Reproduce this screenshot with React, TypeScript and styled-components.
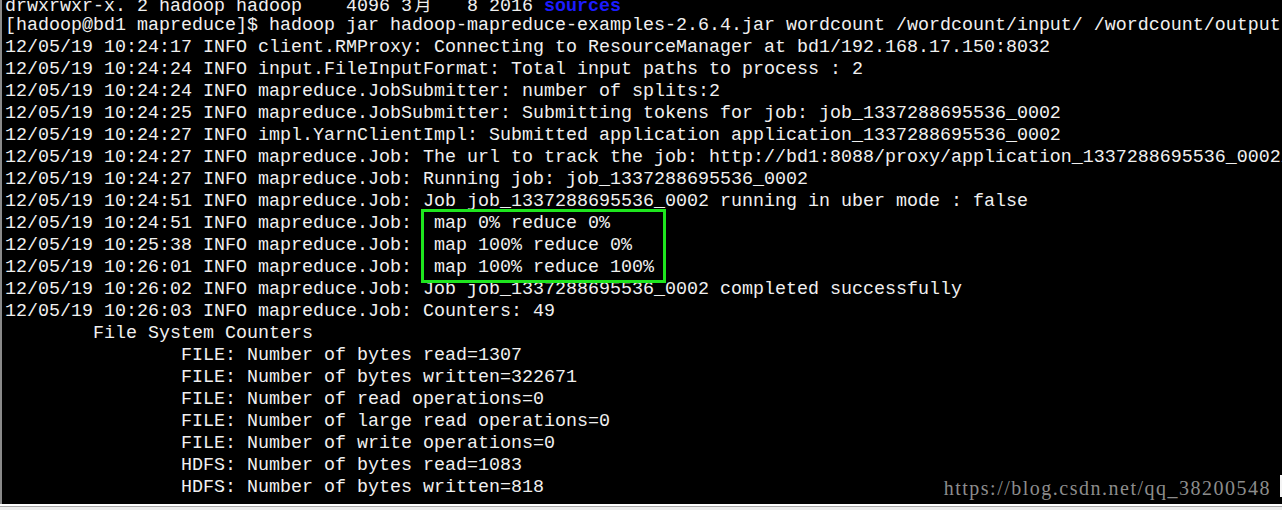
import styled, { createGlobalStyle } from 'styled-components'

const GlobalStyle = createGlobalStyle`
  html, body {
    margin: 0;
    padding: 0;
    background: #f0f0f0;
  }
  #root {
    width: 1282px;
    height: 510px;
    overflow: hidden;
  }
`

const JOB = '1337288695536_0002'
const TS = '12/05/19'

const logLines = [
  '[hadoop@bd1 mapreduce]$ hadoop jar hadoop-mapreduce-examples-2.6.4.jar wordcount /wordcount/input/ /wordcount/output',
  `${TS} 10:24:17 INFO client.RMProxy: Connecting to ResourceManager at bd1/192.168.17.150:8032`,
  `${TS} 10:24:24 INFO input.FileInputFormat: Total input paths to process : 2`,
  `${TS} 10:24:24 INFO mapreduce.JobSubmitter: number of splits:2`,
  `${TS} 10:24:25 INFO mapreduce.JobSubmitter: Submitting tokens for job: job_${JOB}`,
  `${TS} 10:24:27 INFO impl.YarnClientImpl: Submitted application application_${JOB}`,
  `${TS} 10:24:27 INFO mapreduce.Job: The url to track the job: http://bd1:8088/proxy/application_${JOB}/`,
  `${TS} 10:24:27 INFO mapreduce.Job: Running job: job_${JOB}`,
  `${TS} 10:24:51 INFO mapreduce.Job: Job job_${JOB} running in uber mode : false`,
  `${TS} 10:24:51 INFO mapreduce.Job:  map 0% reduce 0%`,
  `${TS} 10:25:38 INFO mapreduce.Job:  map 100% reduce 0%`,
  `${TS} 10:26:01 INFO mapreduce.Job:  map 100% reduce 100%`,
  `${TS} 10:26:02 INFO mapreduce.Job: Job job_${JOB} completed successfully`,
  `${TS} 10:26:03 INFO mapreduce.Job: Counters: 49`,
  '        File System Counters',
  '                FILE: Number of bytes read=1307',
  '                FILE: Number of bytes written=322671',
  '                FILE: Number of read operations=0',
  '                FILE: Number of large read operations=0',
  '                FILE: Number of write operations=0',
  '                HDFS: Number of bytes read=1083',
  '                HDFS: Number of bytes written=818'
]

export default function App () {
  return (
    <Page>
      <GlobalStyle />
      <Screen>
        <Rows>
          <Row>
            drwxrwxr-x. 2 hadoop hadoop    4096 3<Wide>月</Wide>   8 2016{' '}
            <DirName>sources</DirName>
          </Row>
          {logLines.map((line, i) => (
            <Row key={i}>{line}</Row>
          ))}
        </Rows>
        <Highlight />
        <Watermark>https://blog.csdn.net/qq_38200548</Watermark>
        <EdgeMark />
      </Screen>
      <Footer />
    </Page>
  )
}

const Page = styled.div`
  width: 1282px;
  height: 510px;
  display: flex;
  flex-direction: column;
`

const Screen = styled.div`
  position: relative;
  height: 504px;
  background: #000;
  border-left: 2px solid #8a8a8a;
  overflow: hidden;
`

const Rows = styled.div`
  margin-top: -7px;
  padding-left: 3px;
  display: flex;
  flex-direction: column;
  font-family: 'Liberation Mono', 'Courier New', monospace;
  font-size: 18.33px;
  color: #f0f0f0;
`

const Row = styled.div`
  height: 22px;
  line-height: 22px;
  white-space: pre;
`

const Wide = styled.span`
  display: inline-block;
  width: 22px;
  font-family: 'Noto Sans CJK SC', sans-serif;
  font-size: 17px;
  text-align: center;
`

const DirName = styled.span`
  color: #1c1cff;
  font-weight: bold;
`

const Highlight = styled.div`
  position: absolute;
  left: 419px;
  top: 209px;
  width: 245px;
  height: 74px;
  box-sizing: border-box;
  border: 3px solid #1ee61e;
`

const Watermark = styled.div`
  position: absolute;
  right: 11px;
  top: 476px;
  font-family: 'Liberation Serif', 'Times New Roman', serif;
  font-size: 20px;
  letter-spacing: 1.5px;
  line-height: 24px;
  color: #8c8c8c;
`

const EdgeMark = styled.div`
  position: absolute;
  right: 0;
  top: 475px;
  width: 2px;
  height: 22px;
  background: #f4f4f4;
`

const Footer = styled.div`
  flex: 1;
  border-top: 2px solid #ffffff;
  box-shadow: inset 0 1px 0 #a8a8a8;
  background: #ececec;
`
